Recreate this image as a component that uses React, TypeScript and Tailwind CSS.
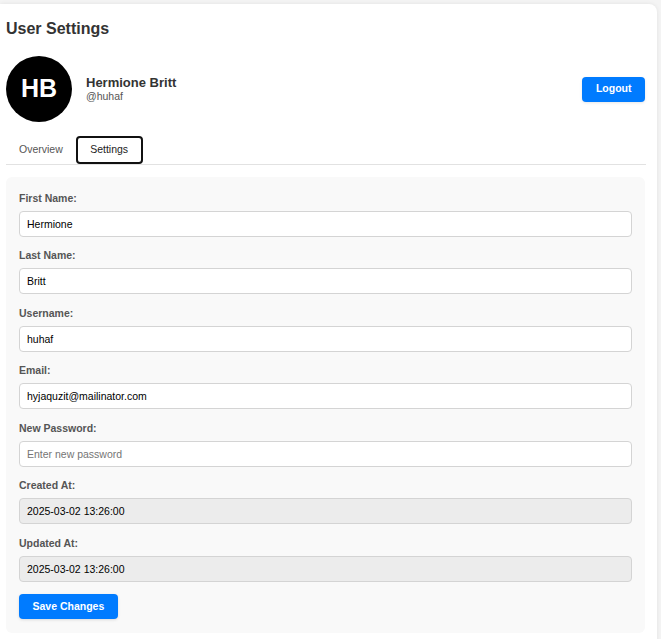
const fields = [
  { label: 'First Name:', value: 'Hermione' },
  { label: 'Last Name:', value: 'Britt' },
  { label: 'Username:', value: 'huhaf' },
  { label: 'Email:', value: 'hyjaquzit@mailinator.com' },
  { label: 'New Password:', value: '', placeholder: 'Enter new password', type: 'password' },
  { label: 'Created At:', value: '2025-03-02 13:26:00', readOnly: true },
  { label: 'Updated At:', value: '2025-03-02 13:26:00', readOnly: true },
];

export default function App() {
  return (
    <div className="min-h-screen bg-[#f4f4f4] pt-[4px] font-['Liberation_Sans',Arial,sans-serif] text-[#333]">
      <div className="w-[657px] bg-white rounded-tr-[8px] shadow-[0_0_4px_rgba(0,0,0,0.08)] pl-[6px] pr-[12px] pt-[16px] pb-[20px]">
        <h1 className="text-[16px] leading-[18px] font-bold text-[#333]">User Settings</h1>

        {/* profile header */}
        <div className="mt-[18px] flex items-center">
          <div className="w-[66px] h-[66px] rounded-full bg-black flex items-center justify-center text-white text-[25px] font-bold">
            HB
          </div>
          <div className="ml-[14px] flex-1 -mt-[1px]">
            <div className="text-[13px] leading-[15px] font-bold text-[#333]">Hermione Britt</div>
            <div className="text-[10.5px] leading-[12px] text-[#555]">@huhaf</div>
          </div>
          <button className="h-[25px] px-[13.5px] rounded-[4px] bg-[#007bff] text-white text-[10.5px] font-bold shadow-[0_1px_3px_rgba(0,0,0,0.1)]">
            Logout
          </button>
        </div>

        {/* tabs */}
        <div className="mt-[13.5px] flex border-b border-[#e2e2e2] w-[640px]">
          <button className="h-[28px] px-[11px] border-2 border-transparent rounded-[4px] text-[10.5px] text-[#555]">
            Overview
          </button>
          <button className="h-[28px] px-[12.4px] border-2 border-[#111] rounded-[4px] text-[10.5px] text-[#222]">
            Settings
          </button>
        </div>

        {/* form */}
        <div className="mt-[12px] bg-[#f9f9f9] rounded-[6px] px-[13px] pt-[15px] pb-[13.6px]">
          {fields.map((f, i) => (
            <div key={f.label} className={i === fields.length - 1 ? 'mb-[11px]' : 'mb-[12.6px]'}>
              <label className="block text-[10.5px] leading-[12px] font-bold text-[#555] mb-[7px]">{f.label}</label>
              <input
                type={f.type ?? 'text'}
                defaultValue={f.value}
                placeholder={f.placeholder}
                readOnly={f.readOnly}
                className={`block w-full h-[26px] px-[7px] border border-[#d4d4d4] rounded-[4px] text-[10.5px] text-black placeholder:text-[#757575] outline-none ${
                  f.readOnly ? 'bg-[#ececec]' : 'bg-white'
                }`}
              />
            </div>
          ))}
          <button className="h-[25px] px-[13.5px] rounded-[4px] bg-[#007bff] text-white text-[10.5px] font-bold shadow-[0_1px_3px_rgba(0,0,0,0.12)]">
            Save Changes
          </button>
        </div>
      </div>
    </div>
  );
}
